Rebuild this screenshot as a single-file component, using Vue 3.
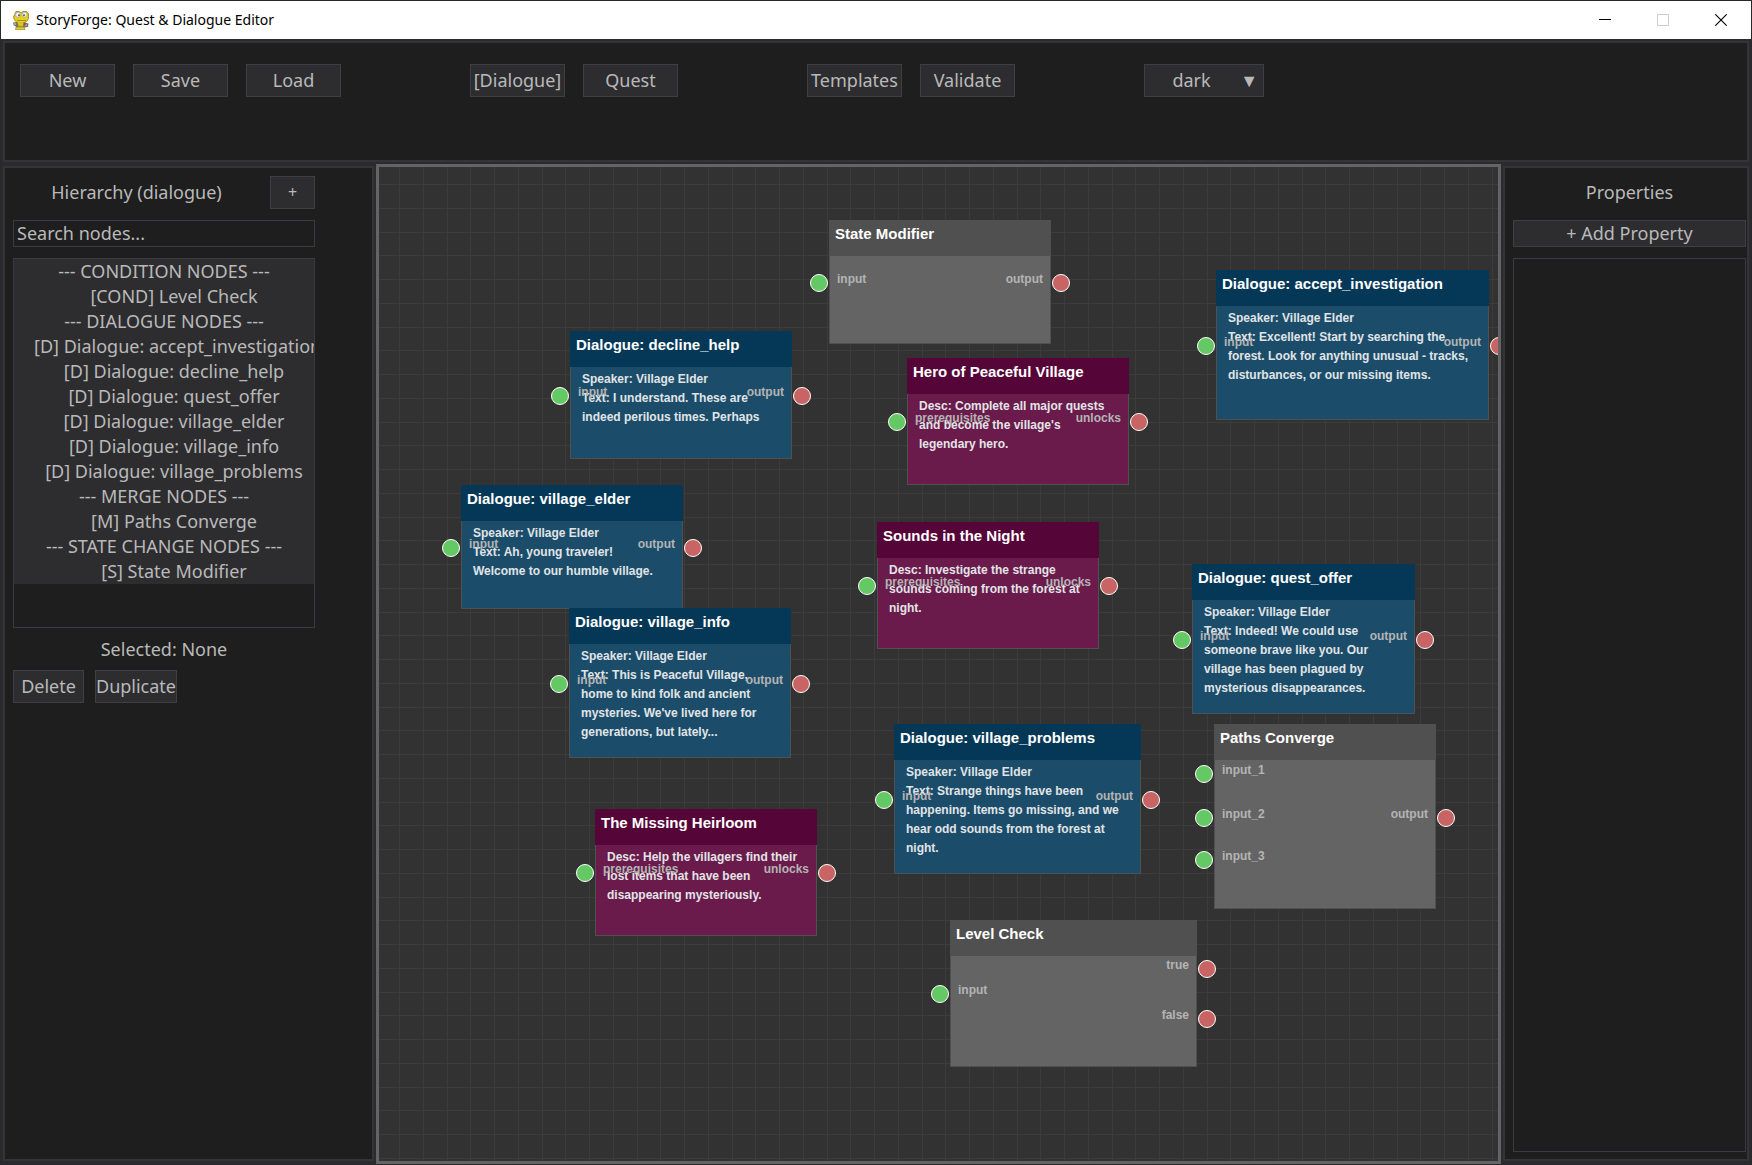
<template>
  <div class="window">
    <header class="titlebar">
      <svg class="logo" viewBox="0 0 18 20" aria-hidden="true">
        <path d="M4 1.500h3l2 1.500 2-1.500h3.500l2 2.500v4l-1 2.500-2.500 2H5L2.500 10 1.500 7z" fill="#e8d01c" stroke="#8c7a1e" stroke-width=".8" />
        <circle cx="6" cy="4.800" r="2.500" fill="#eef0f2" stroke="#9a9a92" stroke-width=".6" />
        <circle cx="12.500" cy="4.800" r="2.500" fill="#eef0f2" stroke="#9a9a92" stroke-width=".6" />
        <circle cx="7" cy="5.300" r="1" fill="#54565c" />
        <circle cx="12" cy="5.300" r="1" fill="#54565c" />
        <path d="M5 10.500h9" stroke="#a8921a" stroke-width="1" />
        <path d="M1 12.500l4-.5 8 .5 3.500 1-.5 3.500-4 .5H5L1.500 15z" fill="#74746c" />
        <path d="M5.500 12h6l-.5 4.500H6.500z" fill="#dcc41e" />
        <path d="M2 14h2M13 15h2" stroke="#d8d8d8" stroke-width="1" />
        <circle cx="12.800" cy="14.300" r="1" fill="#c43a32" />
        <path d="M4 17h8l1 2.500H3.500z" fill="#e8d01c" stroke="#8c7a1e" stroke-width=".6" />
      </svg>
      <h1 class="app-title">StoryForge: Quest &amp; Dialogue Editor</h1>
      <div class="controls">
        <button type="button" aria-label="Minimize">
          <svg viewBox="0 0 12 12"><path d="M0 5.500h12" stroke="#000" /></svg>
        </button>
        <button type="button" aria-label="Maximize" disabled>
          <svg viewBox="0 0 12 12"><path d="M.5.5h11v11H.5z" fill="none" stroke="#ccc" /></svg>
        </button>
        <button type="button" aria-label="Close">
          <svg viewBox="0 0 12 12"><path d="M.3.3l11.400 11.400M11.700.3L.3 11.700" stroke="#000" stroke-width="1.100" /></svg>
        </button>
      </div>
    </header>

    <nav class="toolbar panel">
      <div class="group">
        <button v-for="label in fileActions" :key="label" type="button" class="btn">{{ label }}</button>
      </div>
      <div class="group">
        <button v-for="m in modes" :key="m" type="button" class="btn" @click="mode = m">
          {{ mode === m ? `[${m}]` : m }}
        </button>
      </div>
      <div class="group">
        <button v-for="label in tools" :key="label" type="button" class="btn">{{ label }}</button>
      </div>
      <div class="theme">
        <select v-model="theme" class="btn" aria-label="Theme">
          <option>dark</option>
          <option>light</option>
        </select>
        <span class="arrow" aria-hidden="true">▼</span>
      </div>
    </nav>

    <main class="workspace">
      <aside class="panel hierarchy">
        <div class="hierarchy-head">
          <h2>Hierarchy ({{ mode.toLowerCase() }})</h2>
          <button type="button" class="btn add" aria-label="Add node">+</button>
        </div>
        <input v-model="search" class="search" type="text" placeholder="Search nodes..." aria-label="Search nodes" />
        <ul class="list">
          <li v-for="row in rows" :key="row.text" :class="{ item: row.item }">
            <button v-if="row.item" type="button" @click="selected = row.text">{{ row.text }}</button>
            <span v-else>{{ row.text }}</span>
          </li>
        </ul>
        <p class="selected">Selected: {{ selected }}</p>
        <div class="actions">
          <button type="button" class="btn delete">Delete</button>
          <button type="button" class="btn duplicate">Duplicate</button>
        </div>
      </aside>

      <section class="canvas" aria-label="Node graph">
        <svg class="grid" aria-hidden="true">
          <defs>
            <!-- four cells per tile -->
            <pattern id="cells" x="20" y="17" width="95" height="95" patternUnits="userSpaceOnUse">
              <path d="M.5 0v95M24.500 0v95M48.500 0v95M71.500 0v95M0 .5h95M0 24.500h95M0 48.500h95M0 71.500h95" stroke="#3c3c3c" />
            </pattern>
          </defs>
          <rect width="100%" height="100%" fill="url(#cells)" />
        </svg>

        <article
          v-for="node in nodes"
          :key="node.title"
          class="node"
          :class="node.kind"
          :style="{ left: node.x + 'px', top: node.y + 'px', width: node.w + 'px', height: node.h + 'px' }"
        >
          <h3>{{ node.title }}</h3>
          <p v-if="node.lines">
            <span v-for="line in node.lines" :key="line">{{ line }}</span>
          </p>
          <div v-for="port in node.inputs" :key="port.name" class="port in" :style="{ top: port.y + 'px' }">
            <i></i><span>{{ port.name }}</span>
          </div>
          <div v-for="port in node.outputs" :key="port.name" class="port out" :style="{ top: port.y + 'px' }">
            <span>{{ port.name }}</span><i></i>
          </div>
        </article>
      </section>

      <aside class="panel properties">
        <h2>Properties</h2>
        <button type="button" class="btn add-property">+ Add Property</button>
        <div class="property-list"></div>
      </aside>
    </main>
  </div>
</template>

<script setup>
import { ref, computed } from 'vue';

const fileActions = ['New', 'Save', 'Load'];
const modes = ['Dialogue', 'Quest'];
const tools = ['Templates', 'Validate'];

const mode = ref('Dialogue');
const theme = ref('dark');
const search = ref('');
const selected = ref('None');

const tree = [
  { text: '--- CONDITION NODES ---' },
  { text: '[COND] Level Check', item: true },
  { text: '--- DIALOGUE NODES ---' },
  { text: '[D] Dialogue: accept_investigation', item: true },
  { text: '[D] Dialogue: decline_help', item: true },
  { text: '[D] Dialogue: quest_offer', item: true },
  { text: '[D] Dialogue: village_elder', item: true },
  { text: '[D] Dialogue: village_info', item: true },
  { text: '[D] Dialogue: village_problems', item: true },
  { text: '--- MERGE NODES ---' },
  { text: '[M] Paths Converge', item: true },
  { text: '--- STATE CHANGE NODES ---' },
  { text: '[S] State Modifier', item: true },
];

const rows = computed(() =>
  tree.filter((row) => !row.item || row.text.toLowerCase().includes(search.value.toLowerCase()))
);

const speaker = 'Speaker: Village Elder';

function dialogue(name, x, y, w, h, lines) {
  const middle = Math.ceil(h / 2) + 1;
  return {
    kind: 'dialogue',
    title: 'Dialogue: ' + name,
    x, y, w, h,
    lines: [speaker, ...lines],
    inputs: [{ name: 'input', y: middle }],
    outputs: [{ name: 'output', y: middle }],
  };
}

function quest(title, x, y, lines) {
  return {
    kind: 'quest',
    title, x, y, lines,
    w: 222,
    h: 127,
    inputs: [{ name: 'prerequisites', y: 64 }],
    outputs: [{ name: 'unlocks', y: 64 }],
  };
}

const nodes = [
  dialogue('village_elder', 82, 318, 222, 124, ['Text: Ah, young traveler!', 'Welcome to our humble village.']),
  dialogue('quest_offer', 813, 397, 223, 150, [
    'Text: Indeed! We could use',
    'someone brave like you. Our',
    'village has been plagued by',
    'mysterious disappearances.',
  ]),
  dialogue('village_info', 190, 441, 222, 150, [
    'Text: This is Peaceful Village,',
    'home to kind folk and ancient',
    "mysteries. We've lived here for",
    'generations, but lately...',
  ]),
  dialogue('village_problems', 515, 557, 247, 150, [
    'Text: Strange things have been',
    'happening. Items go missing, and we',
    'hear odd sounds from the forest at',
    'night.',
  ]),
  dialogue('accept_investigation', 837, 103, 273, 150, [
    'Text: Excellent! Start by searching the',
    'forest. Look for anything unusual - tracks,',
    'disturbances, or our missing items.',
  ]),
  dialogue('decline_help', 191, 164, 222, 128, ['Text: I understand. These are', 'indeed perilous times. Perhaps']),
  quest('The Missing Heirloom', 216, 642, [
    'Desc: Help the villagers find their',
    'lost items that have been',
    'disappearing mysteriously.',
  ]),
  quest('Sounds in the Night', 498, 355, [
    'Desc: Investigate the strange',
    'sounds coming from the forest at',
    'night.',
  ]),
  quest('Hero of Peaceful Village', 528, 191, [
    'Desc: Complete all major quests',
    "and become the village's",
    'legendary hero.',
  ]),
  {
    kind: 'logic', title: 'State Modifier', x: 450, y: 53, w: 222, h: 124,
    inputs: [{ name: 'input', y: 63 }],
    outputs: [{ name: 'output', y: 63 }],
  },
  {
    kind: 'logic', title: 'Paths Converge', x: 835, y: 557, w: 222, h: 185,
    inputs: [{ name: 'input_1', y: 50 }, { name: 'input_2', y: 94 }, { name: 'input_3', y: 136 }],
    outputs: [{ name: 'output', y: 94 }],
  },
  {
    kind: 'logic', title: 'Level Check', x: 571, y: 753, w: 247, h: 147,
    inputs: [{ name: 'input', y: 74 }],
    outputs: [{ name: 'true', y: 49 }, { name: 'false', y: 99 }],
  },
];
</script>

<style>
body {
  margin: 0;
  background: #2d2d30;
}
</style>

<style scoped>
* {
  box-sizing: border-box;
}

.window {
  display: flex;
  flex-direction: column;
  min-height: 100vh;
  border: 1px solid #28272a;
  background: #2b2b2d;
  color: #b9b9b9;
  font: 18px/25px "Noto Sans", sans-serif;
}

h1, h2, h3, p, ul {
  margin: 0;
  padding: 0;
  font-weight: 400;
}
h2 {
  font-size: 18px;
}

.titlebar {
  display: flex;
  align-items: center;
  height: 38px;
  padding: 0 1px 0 11px;
  background: #fff;
  color: #000;
}
.logo {
  width: 18px;
  height: 20px;
  margin-right: 6px;
}
.app-title {
  flex: 1;
  font-size: 14px;
  line-height: 20px;
}
.controls {
  display: flex;
  align-self: stretch;
}
.controls button {
  display: flex;
  align-items: center;
  justify-content: center;
  width: 58px;
  border: 0;
  background: none;
}
.controls svg {
  width: 12px;
  height: 12px;
}

.panel {
  border: 2px solid #333338;
  background: #1e1e1e;
}

.btn {
  height: 33px;
  padding: 0 0 1px;
  border: 1px solid #3e3e43;
  border-radius: 0;
  background: #2d2d30;
  color: inherit;
  font: inherit;
  white-space: nowrap;
}

.toolbar {
  display: flex;
  gap: 129px;
  height: 121px;
  margin: 2px 2px 0;
  padding: 21px 15px;
}
.group {
  display: flex;
  gap: 18px;
}
.group .btn {
  width: 95px;
}
.theme {
  position: relative;
  height: 33px;
}
.theme select {
  width: 120px;
  padding-right: 25px;
  appearance: none;
  text-align: center;
  text-align-last: center;
}
.arrow {
  position: absolute;
  top: 4px;
  right: 6px;
  font-size: 18px;
  pointer-events: none;
}

.workspace {
  display: flex;
  flex: 1;
  gap: 2px;
  margin: 2px 2px 0;
}

.hierarchy {
  width: 371px;
  margin: 2px 0 3px;
  padding: 8px 57px 0 8px;
}
.hierarchy-head {
  display: flex;
  align-items: center;
}
.hierarchy-head h2 {
  flex: 1;
  padding-right: 10px;
  text-align: center;
}
.add {
  width: 45px;
  font-size: 16px;
}
.search {
  display: block;
  width: 100%;
  height: 27px;
  margin-top: 11px;
  padding: 0 3px 2px;
  border: 1px solid #3a3a40;
  background: #1e1e1e;
  color: inherit;
  font: inherit;
}
.search::placeholder {
  color: #b9b9b9;
  opacity: 1;
}
.list {
  height: 370px;
  margin-top: 11px;
  border: 1px solid #3a3a40;
  overflow: hidden;
  list-style: none;
}
.list li {
  display: flex;
  justify-content: safe center;
  height: 25px;
  background: #2d2d30;
  white-space: nowrap;
}
.list .item {
  padding-left: 20px;
}
.list button {
  padding: 0;
  border: 0;
  background: none;
  color: inherit;
  font: inherit;
  white-space: nowrap;
}
.selected {
  margin-top: 9px;
  text-align: center;
}
.actions {
  display: flex;
  gap: 11px;
  margin-top: 8px;
}
.delete {
  width: 71px;
}
.duplicate {
  width: 82px;
}

.canvas {
  position: relative;
  flex: 1;
  border: 3px solid #646464;
  background: #323232;
  overflow: hidden;
}
.grid {
  position: absolute;
  width: 100%;
  height: 100%;
}

.node {
  position: absolute;
  border: 1px solid #505050;
  font-family: "Liberation Sans", sans-serif;
  font-weight: 700;
}
.node h3 {
  height: 36px;
  margin: -1px -1px 0;
  padding: 5px 6px;
  color: #fff;
  font-size: 15px;
  font-weight: 700;
  line-height: 18px;
}
.node p {
  padding: 3px 0 0 11px;
  color: #e1e4e6;
  font-size: 12px;
  font-weight: 700;
  line-height: 19px;
}
.node p span {
  display: block;
  white-space: nowrap;
}
.dialogue {
  background: #1b4d6b;
}
.dialogue h3 {
  background: #053857;
}
.quest {
  background: #6b1b4b;
}
.quest h3 {
  background: #550537;
}
.logic {
  background: #646464;
}
.logic h3 {
  background: #505050;
}

.port {
  position: absolute;
  display: flex;
  gap: 9px;
  height: 18px;
  margin-top: -10px;
  color: #b4b4b4;
  font-size: 12px;
  line-height: 10px;
}
.in {
  left: -20px;
}
.out {
  right: -20px;
}
.port i {
  width: 18px;
  height: 18px;
  border: 1px solid #fff;
  border-radius: 50%;
}
.in i {
  background: #64c864;
}
.out i {
  background: #c86464;
}

.properties {
  display: flex;
  flex-direction: column;
  width: 246px;
  margin: 2px 0 3px;
  padding: 12px 1px 7px 8px;
  text-align: center;
}
.add-property {
  height: 27px;
  margin-top: 15px;
}
.property-list {
  flex: 1;
  margin-top: 11px;
  border: 1px solid #3a3a40;
}
</style>
